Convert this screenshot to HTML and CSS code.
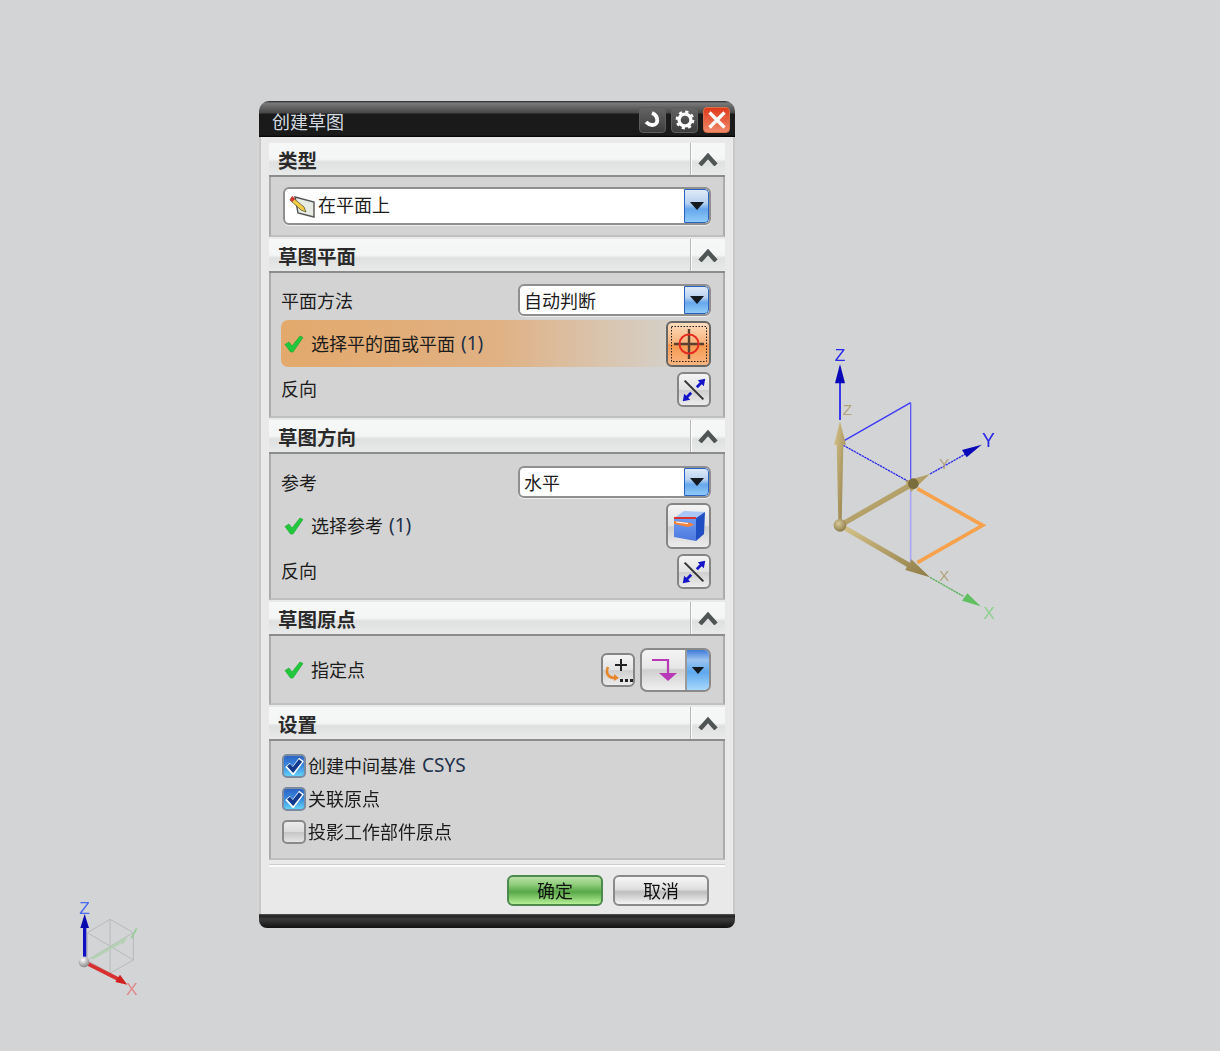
FILE: index.html
```html
<!DOCTYPE html>
<html lang="zh-CN">
<head>
<meta charset="utf-8">
<title>创建草图</title>
<link rel="stylesheet" href="styles.css">
</head>
<body>
<svg class="defs" width="0" height="0" aria-hidden="true">
  <defs>
    <symbol id="chev" viewBox="0 0 20 14"><path d="M2 13 L10 4 L18 13" fill="none" stroke="#4f5455" stroke-width="4.400"/></symbol>
    <symbol id="check" viewBox="0 0 20 18"><path d="M1 9.500 L5 7 L8 11 L16 1 L19 2.500 L9 17 L6.500 17 Z" fill="#22c83c" stroke="#14a52c" stroke-width=".6"/></symbol>
    <symbol id="tri" viewBox="0 0 16 10"><path d="M1 1 H15 L8 9 Z" fill="#14181f"/></symbol>
    <symbol id="rev" viewBox="0 0 32 32">
      <path d="M6 6 L26 26" stroke="#333" stroke-width="2.200"/>
      <path d="M19 13 L24 8" stroke="#1414c8" stroke-width="3"/>
      <path d="M28 4 L26.500 12 L20 5.500 Z" fill="#1414c8"/>
      <path d="M13 19 L8 24" stroke="#1414c8" stroke-width="3"/>
      <path d="M4 28 L5.500 20 L12 26.500 Z" fill="#1414c8"/>
    </symbol>
    <symbol id="cbcheck" viewBox="0 0 19 18"><path d="M2.500 8 L8 14 L16.500 2.500" fill="none" stroke="#fff" stroke-width="6"/><path d="M3.500 8 L8 13 L15.500 3.500" fill="none" stroke="#123a8c" stroke-width="4"/></symbol>
    <linearGradient id="tan" x1="0" y1="0" x2="1" y2="1"><stop offset="0" stop-color="#d9c68e"/><stop offset="1" stop-color="#8e7b45"/></linearGradient>
    <radialGradient id="ball" cx=".4" cy=".35" r=".7"><stop offset="0" stop-color="#d8c99a"/><stop offset="1" stop-color="#8a7845"/></radialGradient>
    <radialGradient id="ballw" cx=".4" cy=".3" r=".8"><stop offset="0" stop-color="#fff"/><stop offset="1" stop-color="#777"/></radialGradient>
    <linearGradient id="cubef" x1="0" y1="0" x2="0" y2="1"><stop offset="0" stop-color="#6f9cf0"/><stop offset="1" stop-color="#4c78e0"/></linearGradient>
  </defs>
</svg>

<section class="dialog">
  <header class="titlebar">
    <span class="title">创建草图</span>
    <div class="winbtns">
      <button class="winbtn"><svg width="22" height="22" viewBox="0 0 22 22"><path d="M10 4 C17 7 17 16 10 16 C8 16 6 15 4 13" fill="none" stroke="#fff" stroke-width="3.800"/></svg></button>
      <button class="winbtn"><svg width="22" height="22" viewBox="0 0 24 24"><circle cx="12" cy="12" r="6.500" fill="none" stroke="#fff" stroke-width="3.600"/><circle cx="12" cy="12" r="9" fill="none" stroke="#fff" stroke-width="2.500" stroke-dasharray="3.500 3.570"/></svg></button>
      <button class="winbtn close"><svg width="20" height="20" viewBox="0 0 20 20"><path d="M2.500 2.500 L17.500 17.500 M17.500 2.500 L2.500 17.500" stroke="#fff" stroke-width="3.200"/></svg></button>
    </div>
  </header>

  <div class="panels">
    <div class="group">
      <div class="ghead"><h2>类型</h2><span class="collapse"><svg width="20" height="14"><use href="#chev"/></svg></span></div>
      <div class="gbody type-body">
        <div class="combo tall">
          <svg class="combo-icon" width="28" height="26" viewBox="0 0 28 26">
            <path d="M6 4 L25 9 L25 24 L9 20 Z" fill="#e6ece4" stroke="#555" stroke-width="1.400"/>
            <path d="M3 4 L15 14 L17 19 L12 17 L1 7 Z" fill="#f4cf45" stroke="#553" stroke-width=".8"/>
            <path d="M1 7 L3 3 L6 5.500 L3.500 9 Z" fill="#d8342c"/>
          </svg>
          <span class="combo-text">在平面上</span>
          <span class="combo-arrow"><svg width="16" height="10"><use href="#tri"/></svg></span>
        </div>
      </div>
    </div>

    <div class="group">
      <div class="ghead"><h2>草图平面</h2><span class="collapse"><svg width="20" height="14"><use href="#chev"/></svg></span></div>
      <div class="gbody plane-body plane-first">
        <div class="row combo-row">
          <span>平面方法</span>
          <div class="combo short"><span class="combo-text">自动判断</span><span class="combo-arrow"><svg width="16" height="10"><use href="#tri"/></svg></span></div>
        </div>
        <div class="row select-row active">
          <span class="sel-label"><svg class="tick" width="20" height="18"><use href="#check"/></svg>选择平的面或平面 <span class="count">(1)</span></span>
          <button class="iconbtn big orange">
            <svg width="38" height="38" viewBox="0 0 38 38">
              <rect x="1.500" y="1.500" width="35" height="35" fill="none" stroke="#222" stroke-dasharray="1.500 1.500"/>
              <path d="M19 4 V34 M4 19 H34" stroke="#5a4030" stroke-width="2.400"/>
              <circle cx="19" cy="19" r="9.500" fill="none" stroke="#e82a20" stroke-width="2"/>
            </svg>
          </button>
        </div>
        <div class="row rev-row">
          <span class="rev-label">反向</span>
          <button class="iconbtn small"><svg width="30" height="30"><use href="#rev"/></svg></button>
        </div>
      </div>
    </div>

    <div class="group">
      <div class="ghead"><h2>草图方向</h2><span class="collapse"><svg width="20" height="14"><use href="#chev"/></svg></span></div>
      <div class="gbody plane-body">
        <div class="row combo-row">
          <span>参考</span>
          <div class="combo short"><span class="combo-text">水平</span><span class="combo-arrow"><svg width="16" height="10"><use href="#tri"/></svg></span></div>
        </div>
        <div class="row select-row">
          <span class="sel-label"><svg class="tick" width="20" height="18"><use href="#check"/></svg>选择参考 <span class="count">(1)</span></span>
          <button class="iconbtn big">
            <svg width="36" height="34" viewBox="0 0 36 34">
              <path d="M3 9 L25 9 L25 32 L3 28 Z" fill="url(#cubef)"/>
              <path d="M3 9 L13 2 L34 3 L25 9 Z" fill="#a9c6f5"/>
              <path d="M25 9 L34 3 L33 25 L25 32 Z" fill="#1f4fc0"/>
              <path d="M3 9 H25" stroke="#d8342c" stroke-width="2"/>
              <path d="M3 12 L20 14 L23 16 L17 18 L3 15 Z" fill="#f5843a"/>
              <path d="M5 13 L17 14.500" stroke="#fff" stroke-width="1.200"/>
            </svg>
          </button>
        </div>
        <div class="row rev-row">
          <span class="rev-label">反向</span>
          <button class="iconbtn small"><svg width="30" height="30"><use href="#rev"/></svg></button>
        </div>
      </div>
    </div>

    <div class="group">
      <div class="ghead"><h2>草图原点</h2><span class="collapse"><svg width="20" height="14"><use href="#chev"/></svg></span></div>
      <div class="gbody origin-body">
        <span class="sel-label"><svg class="tick" width="20" height="18"><use href="#check"/></svg>指定点</span>
        <div class="origin-tools">
          <button class="iconbtn pt">
            <svg width="30" height="28" viewBox="0 0 30 28">
              <path d="M18 3 V15 M12 9 H24" stroke="#222" stroke-width="2"/>
              <path d="M5 11 C2 18 6 22 12 22" fill="none" stroke="#e8862c" stroke-width="2.600"/>
              <path d="M11 18 L16 22 L11 25 Z" fill="#e8862c"/>
              <path d="M17 23 h3 v3 h-3 z M22 23 h3 v3 h-3 z M27 23 h3 v3 h-3 z" fill="#222"/>
            </svg>
          </button>
          <div class="split">
            <span class="split-main">
              <svg width="30" height="28" viewBox="0 0 30 28"><path d="M3 4 H19 V18" fill="none" stroke="#b838b8" stroke-width="2.200"/><path d="M10 17 H28 L19 25 Z" fill="#b838b8"/></svg>
            </span>
            <span class="split-arrow"><svg width="14" height="9"><use href="#tri"/></svg></span>
          </div>
        </div>
      </div>
    </div>

    <div class="group">
      <div class="ghead"><h2>设置</h2><span class="collapse"><svg width="20" height="14"><use href="#chev"/></svg></span></div>
      <div class="gbody settings-body">
        <label class="cb-row"><span class="cb on"><svg width="19" height="18"><use href="#cbcheck"/></svg></span>创建中间基准 <span class="count csys">CSYS</span></label>
        <label class="cb-row"><span class="cb on"><svg width="19" height="18"><use href="#cbcheck"/></svg></span>关联原点</label>
        <label class="cb-row"><span class="cb"></span>投影工作部件原点</label>
      </div>
    </div>
  </div>

  <footer class="actions">
    <button class="act ok">确定</button>
    <button class="act">取消</button>
  </footer>
  <div class="bottombar"></div>
</section>

<svg class="triad" width="190" height="290" viewBox="0 0 570 870">
  <path d="M62 308 L272 188" stroke="#3a3af5" stroke-width="4" fill="none"/>
  <path d="M272 188 V440" stroke="#5a5af5" stroke-width="4"/>
  <path d="M272 440 V672" stroke="#a8a8f2" stroke-width="5"/>
  <path d="M70 316 L272 428" stroke="#2a2ae8" stroke-width="4" stroke-dasharray="7 2"/>
  <path d="M330 402 L440 340" stroke="#2a2ae8" stroke-width="4" stroke-dasharray="7 2"/>
  <path d="M60 240 V110" stroke="#1818f0" stroke-width="5"/>
  <path d="M60 72 L72 118 L75 130 H45 L48 118 Z" fill="#0808b8"/>
  <path d="M485 314 L440 352 L426 330 Z" fill="#0808b8"/>
  <path d="M292 446 L488 556 L292 668" fill="none" stroke="#f6a24c" stroke-width="11"/>
  <path d="M330 712 L432 770" stroke="#58b058" stroke-width="4" stroke-dasharray="7 2"/>
  <path d="M482 799 L426 782 L442 760 Z" fill="#60c060"/>
  <path d="M60 244 L78 314 H70 L65 545 H55 L50 314 H42 Z" fill="url(#tan)"/>
  <path d="M330 402 L274 455 L268 446 L62 564 L56 550 L260 432 L256 423 Z" fill="url(#tan)"/>
  <path d="M330 712 L256 690 L260 680 L56 562 L62 548 L270 668 L274 658 Z" fill="url(#tan)"/>
  <circle cx="280" cy="431" r="16" fill="#7b6c3e"/>
  <circle cx="60" cy="556" r="19" fill="url(#ball)"/>
  <text class="t" x="44" y="64" fill="#2828e8">Z</text>
  <text class="t wide-t" x="486" y="322" fill="#2828e8">Y</text>
  <text class="t" x="490" y="838" fill="#90d090">X</text>
  <text class="t small-t" x="68" y="224" fill="#b3a27a">Z</text>
  <text class="t small-t" x="357" y="388" fill="#b3a27a">Y</text>
  <text class="t small-t" x="357" y="724" fill="#b3a27a">X</text>
</svg>

<svg class="mini" width="80" height="110" viewBox="0 0 240 330">
  <g fill="none" stroke="#b6baba" stroke-width="3">
    <path d="M120 88 L190 128 V210 L120 250 L52 210 V128 Z"/>
    <path d="M120 88 V250 M52 128 L190 210 M190 128 L52 210"/>
  </g>
  <path d="M66 206 L150 158" stroke="#b2d2b2" stroke-width="8"/>
  <path d="M172 142 L148 150 L156 166 Z" fill="#b2d2b2"/>
  <path d="M184 145 L200 115" stroke="#98cc98" stroke-width="5"/>
  <path d="M44 200 V112" stroke="#1010c0" stroke-width="10"/>
  <path d="M44 72 L57 114 H31 Z" fill="#0808b0"/>
  <path d="M55 222 L150 270" stroke="#d83030" stroke-width="11"/>
  <path d="M172 284 L136 276 L150 254 Z" fill="#d02020"/>
  <circle cx="42" cy="216" r="16" fill="url(#ballw)"/>
  <text class="t" x="28" y="72" fill="#4a6af0">Z</text>
  <text class="t" x="168" y="316" fill="#e08888">X</text>
</svg>
</body>
</html>
```

FILE: styles.css
```css
* { box-sizing: border-box; }
html, body { margin: 0; height: 100%; }
body {
  background: #d3d4d6;
  font-family: "Noto Sans CJK SC", "Noto Sans", sans-serif;
  font-size: 18px;
  color: #1c1c1c;
  overflow: hidden;
  position: relative;
}
.defs { position: absolute; }

.dialog {
  position: absolute;
  left: 259px;
  top: 101px;
  width: 476px;
  height: 827px;
  display: flex;
  flex-direction: column;
  background: #e9e9e9;
  border-radius: 10px 10px 8px 8px;
  box-shadow: inset 2px 0 0 #c8c8c8, inset -2px 0 0 #c8c8c8;
  overflow: hidden;
  filter: blur(.35px);
}

.titlebar {
  height: 36px;
  flex: none;
  display: flex;
  align-items: center;
  justify-content: space-between;
  padding: 0 5px 0 13px;
  background: linear-gradient(#222 0, #7a7a7a 2px, #474747 12px, #1a1a1a 13px, #1a1a1a 34px, #000 36px);
}
.title { color: #d4dae2; line-height: 36px; padding-top: 3px; }
.winbtns { display: flex; gap: 5px; margin-top: 2px; }
.winbtn {
  width: 27px;
  height: 26px;
  padding: 0;
  border: 1px solid #5e5e5e;
  border-radius: 4px;
  background: linear-gradient(#646464, #3c3c3c);
  display: flex;
  align-items: center;
  justify-content: center;
}
.winbtn.close {
  border-color: #d8704a;
  background: linear-gradient(#e0391b, #f08a6a);
}

.panels {
  flex: none;
  padding: 6px 10px 0;
  display: flex;
  flex-direction: column;
  gap: 2px;
}
.group { display: flex; flex-direction: column; }
.ghead {
  height: 34px;
  display: flex;
  align-items: stretch;
  justify-content: space-between;
  background: linear-gradient(#f6f7f7 0, #f4f5f5 16px, #dfe0e0 19px, #e9eaea 33px);
  border-bottom: 2px solid #8c8c8c;
}
.ghead h2 {
  margin: 0;
  padding: 4px 0 0 9px;
  font-size: 19.500px;
  line-height: 26px;
  font-weight: 700;
  color: #2a2a2a;
}
.collapse {
  width: 35px;
  border-left: 1px solid #b5b5b5;
  box-shadow: inset 1px 0 0 #fff;
  display: flex;
  align-items: center;
  justify-content: center;
  padding-bottom: 1px;
}
.gbody {
  background: #d3d3d3;
  border-left: 2px solid #ababab;
  border-right: 2px solid #ababab;
  border-bottom: 2px solid #c0c0c0;
}
.type-body { height: 60px; padding: 10px 12px 0; }
.plane-body { height: 146px; padding: 12px 12px 0 10px; display: flex; flex-direction: column; }
.plane-first { height: 145px; padding-top: 11px; }

.combo {
  display: flex;
  align-items: center;
  background: #fff;
  border: 2px solid #8f8f8f;
  border-radius: 6px;
  overflow: hidden;
  box-shadow: 0 1px 0 #eee;
}
.combo.tall { height: 38px; padding-left: 4px; }
.combo.short { width: 193px; height: 32px; padding-left: 4px; }
.combo-icon { flex: none; margin-right: 1px; }
.combo-text { flex: 1; line-height: 28px; }
.combo.tall .combo-text { padding-bottom: 4px; }
.combo-arrow, .split-arrow {
  align-self: stretch;
  width: 25px;
  display: flex;
  align-items: center;
  justify-content: center;
  background: linear-gradient(#dfeaf8 0, #b9d2ef 40%, #66a7ec 60%, #8fcaf8 100%);
  border: 1px solid #2a62c4;
  border-radius: 0 4px 4px 0;
}

.row { display: flex; align-items: center; justify-content: space-between; }
.combo-row { height: 32px; }
.select-row {
  height: 47px;
  margin-top: 4px;
  border-radius: 7px 0 0 7px;
}
.select-row.active {
  background: linear-gradient(90deg, #e3a96c 0, #e0b183 50%, #d5cec4 88%, #d3d3d3 100%);
}
.rev-row { height: 35px; margin-top: 5px; }
.rev-label { padding-bottom: 3px; }

.sel-label { display: flex; align-items: center; gap: 7px; padding: 0 0 2px 3px; white-space: pre; }
.tick { flex: none; margin-top: 2px; }
.count { color: #20304a; font-family: "Noto Sans", sans-serif; font-size: 19px; margin-left: -5px; }

.iconbtn {
  padding: 0;
  display: flex;
  align-items: center;
  justify-content: center;
  border: 2px solid #858585;
  border-radius: 6px;
  background: linear-gradient(#f4f4f4, #e2e2e2 50%, #cfcfcf 52%, #ececec);
}
.iconbtn.big { width: 45px; height: 46px; }
.iconbtn.small { width: 34px; height: 35px; }
.iconbtn.orange {
  border-color: #666;
  background: linear-gradient(#fbdcbc, #f8b27a 48%, #f4984f 52%, #fcb680);
}

.origin-body {
  height: 69px;
  padding: 12px 12px 0 10px;
  display: flex;
  align-items: flex-start;
  justify-content: space-between;
}
.origin-body > .sel-label { height: 44px; }
.origin-tools { display: flex; align-items: center; gap: 5px; }
.iconbtn.pt { width: 34px; height: 34px; }
.split {
  width: 71px;
  height: 44px;
  display: flex;
  border: 2px solid #8a8a8a;
  border-radius: 7px;
  overflow: hidden;
  background: linear-gradient(#f4f4f4, #e6e6e6 45%, #cfcfcf 50%, #f0f0f0);
}
.split-main { flex: 1; display: flex; align-items: center; justify-content: center; border-right: 2px solid #9a9a9a; }
.split-arrow { flex: none; width: 22px; border-radius: 0; border-width: 0; background: linear-gradient(#3f7bd8, #9cc4f0 25%, #5ea8ee 55%, #a8d8fc); }

.settings-body {
  height: 119px;
  padding: 13px 10px 0 11px;
  display: flex;
  flex-direction: column;
  gap: 9px;
}
.cb-row { display: flex; align-items: flex-start; height: 24px; line-height: 22px; white-space: pre; }
.cb {
  width: 24px;
  height: 24px;
  margin-right: 2px;
  flex: none;
  display: flex;
  align-items: center;
  justify-content: center;
  border: 2px solid #8a8a8a;
  border-radius: 5px;
  background: linear-gradient(#ececec, #dcdcdc 48%, #c6c6c6 52%, #e4e4e4);
}
.cb.on { background: linear-gradient(#2c64c4, #3a8ae0 50%, #62d2f8); border-color: #7a8aa0; }
.count.csys { margin-left: 2px; }

.actions {
  margin: 5px 10px 0;
  height: 49px;
  flex: none;
  border-top: 2px solid #fafafa;
  box-shadow: 0 -1px 0 #cfcfcf;
  display: flex;
  justify-content: flex-end;
  align-items: flex-start;
  gap: 10px;
  padding: 8px 16px 0 0;
}
.act {
  width: 96px;
  height: 31px;
  padding: 0 0 2px;
  font: inherit;
  line-height: 26px;
  color: #111;
  border: 2px solid #8a8a8a;
  border-radius: 6px;
  background: linear-gradient(#f6f6f6, #e0e0e0 45%, #bdbdbd 55%, #f4f4f4);
}
.act.ok {
  border-color: #4d8a4d;
  background: linear-gradient(#b8e0a8, #8ccb78 30%, #58a848 55%, #b6f096);
}
.bottombar {
  flex: 1;
  background: linear-gradient(#555 0, #222 2px, #3b3b3b 5px, #111 100%);
}

.triad, .mini { position: absolute; }
.triad { left: 820px; top: 340px; filter: blur(.5px); }
.mini { left: 70px; top: 890px; filter: blur(.5px); }
.t { font-family: "Liberation Sans", sans-serif; font-size: 52px; }
.wide-t { font-size: 58px; }
.small-t { font-size: 46px; }
```
